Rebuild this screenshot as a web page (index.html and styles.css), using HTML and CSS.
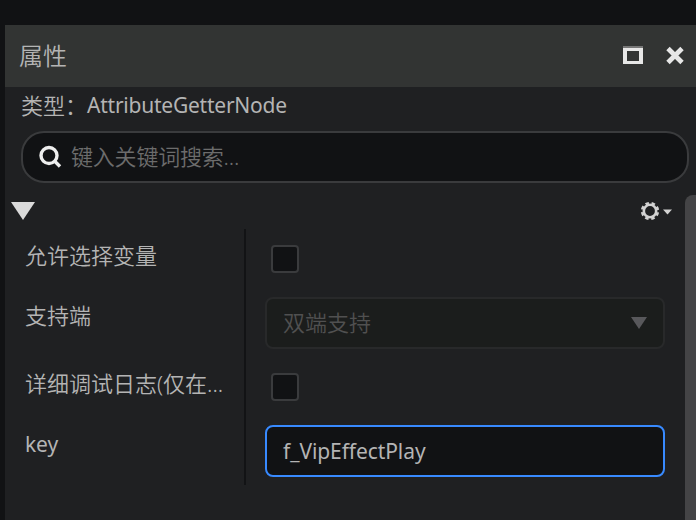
FILE: index.html
```
<!DOCTYPE html>
<html lang="zh-CN">
<head>
<meta charset="utf-8">
<title>属性</title>
<link rel="stylesheet" href="styles.css">
</head>
<body>
<main class="panel">
  <header class="titlebar">
    <h1 class="title">属性</h1>
    <svg class="win-icon maximize" width="22" height="20" viewBox="0 0 22 20"><path class="shade" d="M1 0H21V2H1z"/><path d="M1 2H21V18H1zM5 5V15H17V5z" fill-rule="evenodd"/></svg>
    <svg class="win-icon close" width="20" height="20" viewBox="0 0 20 20"><path d="M3 2.500L17 16.500M17 2.500L3 16.500"/></svg>
  </header>
  <div class="type-row"><span class="type-label">类型：</span><span class="type-name">AttributeGetterNode</span></div>
  <div class="search">
    <svg width="24" height="24" viewBox="0 0 24 24"><circle cx="10" cy="10.500" r="8"/><path d="M15.500 16L21 21.500"/></svg>
    <span class="placeholder">键入关键词搜索...</span>
  </div>
  <div class="scroll-area">
    <section class="content">
      <div class="section-head">
        <svg class="fold" width="24" height="18" viewBox="0 0 24 18"><path d="M0 0H24L12 18z"/></svg>
        <svg class="gear" width="34" height="20" viewBox="0 0 34 20"><circle class="teeth" cx="10" cy="10" r="7.700"/><circle class="ring" cx="10" cy="10" r="6.200"/><path d="M23 8.500H32L27.500 13.500z"/></svg>
      </div>
      <div class="props">
        <div class="row"><span class="label">允许选择变量</span><div class="field"><span class="checkbox"></span></div></div>
        <div class="row tall"><span class="label">支持端</span><div class="field"><div class="control select"><span>双端支持</span><svg width="16" height="12" viewBox="0 0 16 12"><path d="M0 0H16L8 12z"/></svg></div></div></div>
        <div class="row"><span class="label">详细调试日志(仅在...</span><div class="field"><span class="checkbox"></span></div></div>
        <div class="row tall"><span class="label key">key</span><div class="field"><div class="control input"><span>f_VipEffectPlay</span></div></div></div>
      </div>
    </section>
    <div class="scrollbar"></div>
  </div>
</main>
</body>
</html>
```
FILE: styles.css
```
* { box-sizing: border-box; }
body {
  margin: 0;
  height: 520px;
  overflow: hidden;
  padding: 25px 0 0 5px;
  background: #111214;
  color: #b4b4b4;
  font: 22px/30px "Noto Sans", "Noto Sans CJK SC", sans-serif;
  font-weight: 350;
}
svg { display: block; flex: none; }
.panel { height: 495px; display: flex; flex-direction: column; background: #1f2022; }
.titlebar { height: 62px; flex: none; display: flex; align-items: center; padding: 0 11px 0 14px; background: #323433; }
.title { margin: 0 auto 0 0; font-size: 24px; font-weight: 350; }
.win-icon { fill: #e7e7e7; }
.maximize .shade { fill: #777; }
.close { margin-left: 21px; fill: none; stroke: #e7e7e7; stroke-width: 4.800; }
.type-row { display: flex; height: 36px; margin: 1px 0 7px 16px; line-height: 34px; }
.type-name { font-size: 21px; font-weight: 400; letter-spacing: -.23px; }
.search {
  flex: none;
  display: flex;
  align-items: center;
  width: 668px;
  height: 52px;
  margin-left: 16px;
  padding-left: 16px;
  border: 2px solid #3a3b3d;
  border-radius: 23px;
  background: #111214;
  color: #6c6c6c;
}
.search svg { fill: none; stroke: #eee; stroke-width: 3.400; }
.placeholder { margin: -2px 0 0 8px; letter-spacing: -.2px; }
.scroll-area { display: flex; flex: 1; padding-top: 12px; }
.content { flex: 1; }
.scrollbar { width: 11px; border-radius: 8px 0 0; background: #444446; }
.section-head { display: flex; justify-content: space-between; height: 34px; padding: 7px 11px 0 6px; }
.fold { fill: #dadada; }
.gear { margin-top: -1px; fill: #d2d2d2; }
.gear circle { fill: none; stroke: #d2d2d2; }
.gear .teeth { stroke-width: 3; stroke-dasharray: 3.400 2.648; stroke-dashoffset: -1.320; }
.gear .ring { stroke-width: 2.600; }
.row { display: grid; grid-template-columns: 241px 1fr; height: 64px; }
.label { padding: 11px 0 0 20px; white-space: nowrap; }
.tall .label { padding-top: 7px; }
.tall .key { padding-top: 8px; font-size: 21px; font-weight: 400; letter-spacing: -.1px; }
.field { display: flex; align-items: center; margin-left: -2px; padding: 0 20px 4px 19px; border-left: 2px solid #121315; }
.checkbox { width: 28px; height: 28px; margin-left: 6px; border: 2px solid #3a3b3d; border-radius: 4px; background: #111214; }
.control { flex: 1; height: 52px; display: flex; align-items: center; justify-content: space-between; padding: 0 16px; border: 2px solid; border-radius: 8px; }
.select { background: #1b1d1c; border-color: #28292a; color: #505050; }
.select span { margin-top: -2px; }
.select svg { fill: #58585b; }
.input { background: #111214; border-color: #388aff; font-size: 21px; font-weight: 400; letter-spacing: -.08px; }
```
